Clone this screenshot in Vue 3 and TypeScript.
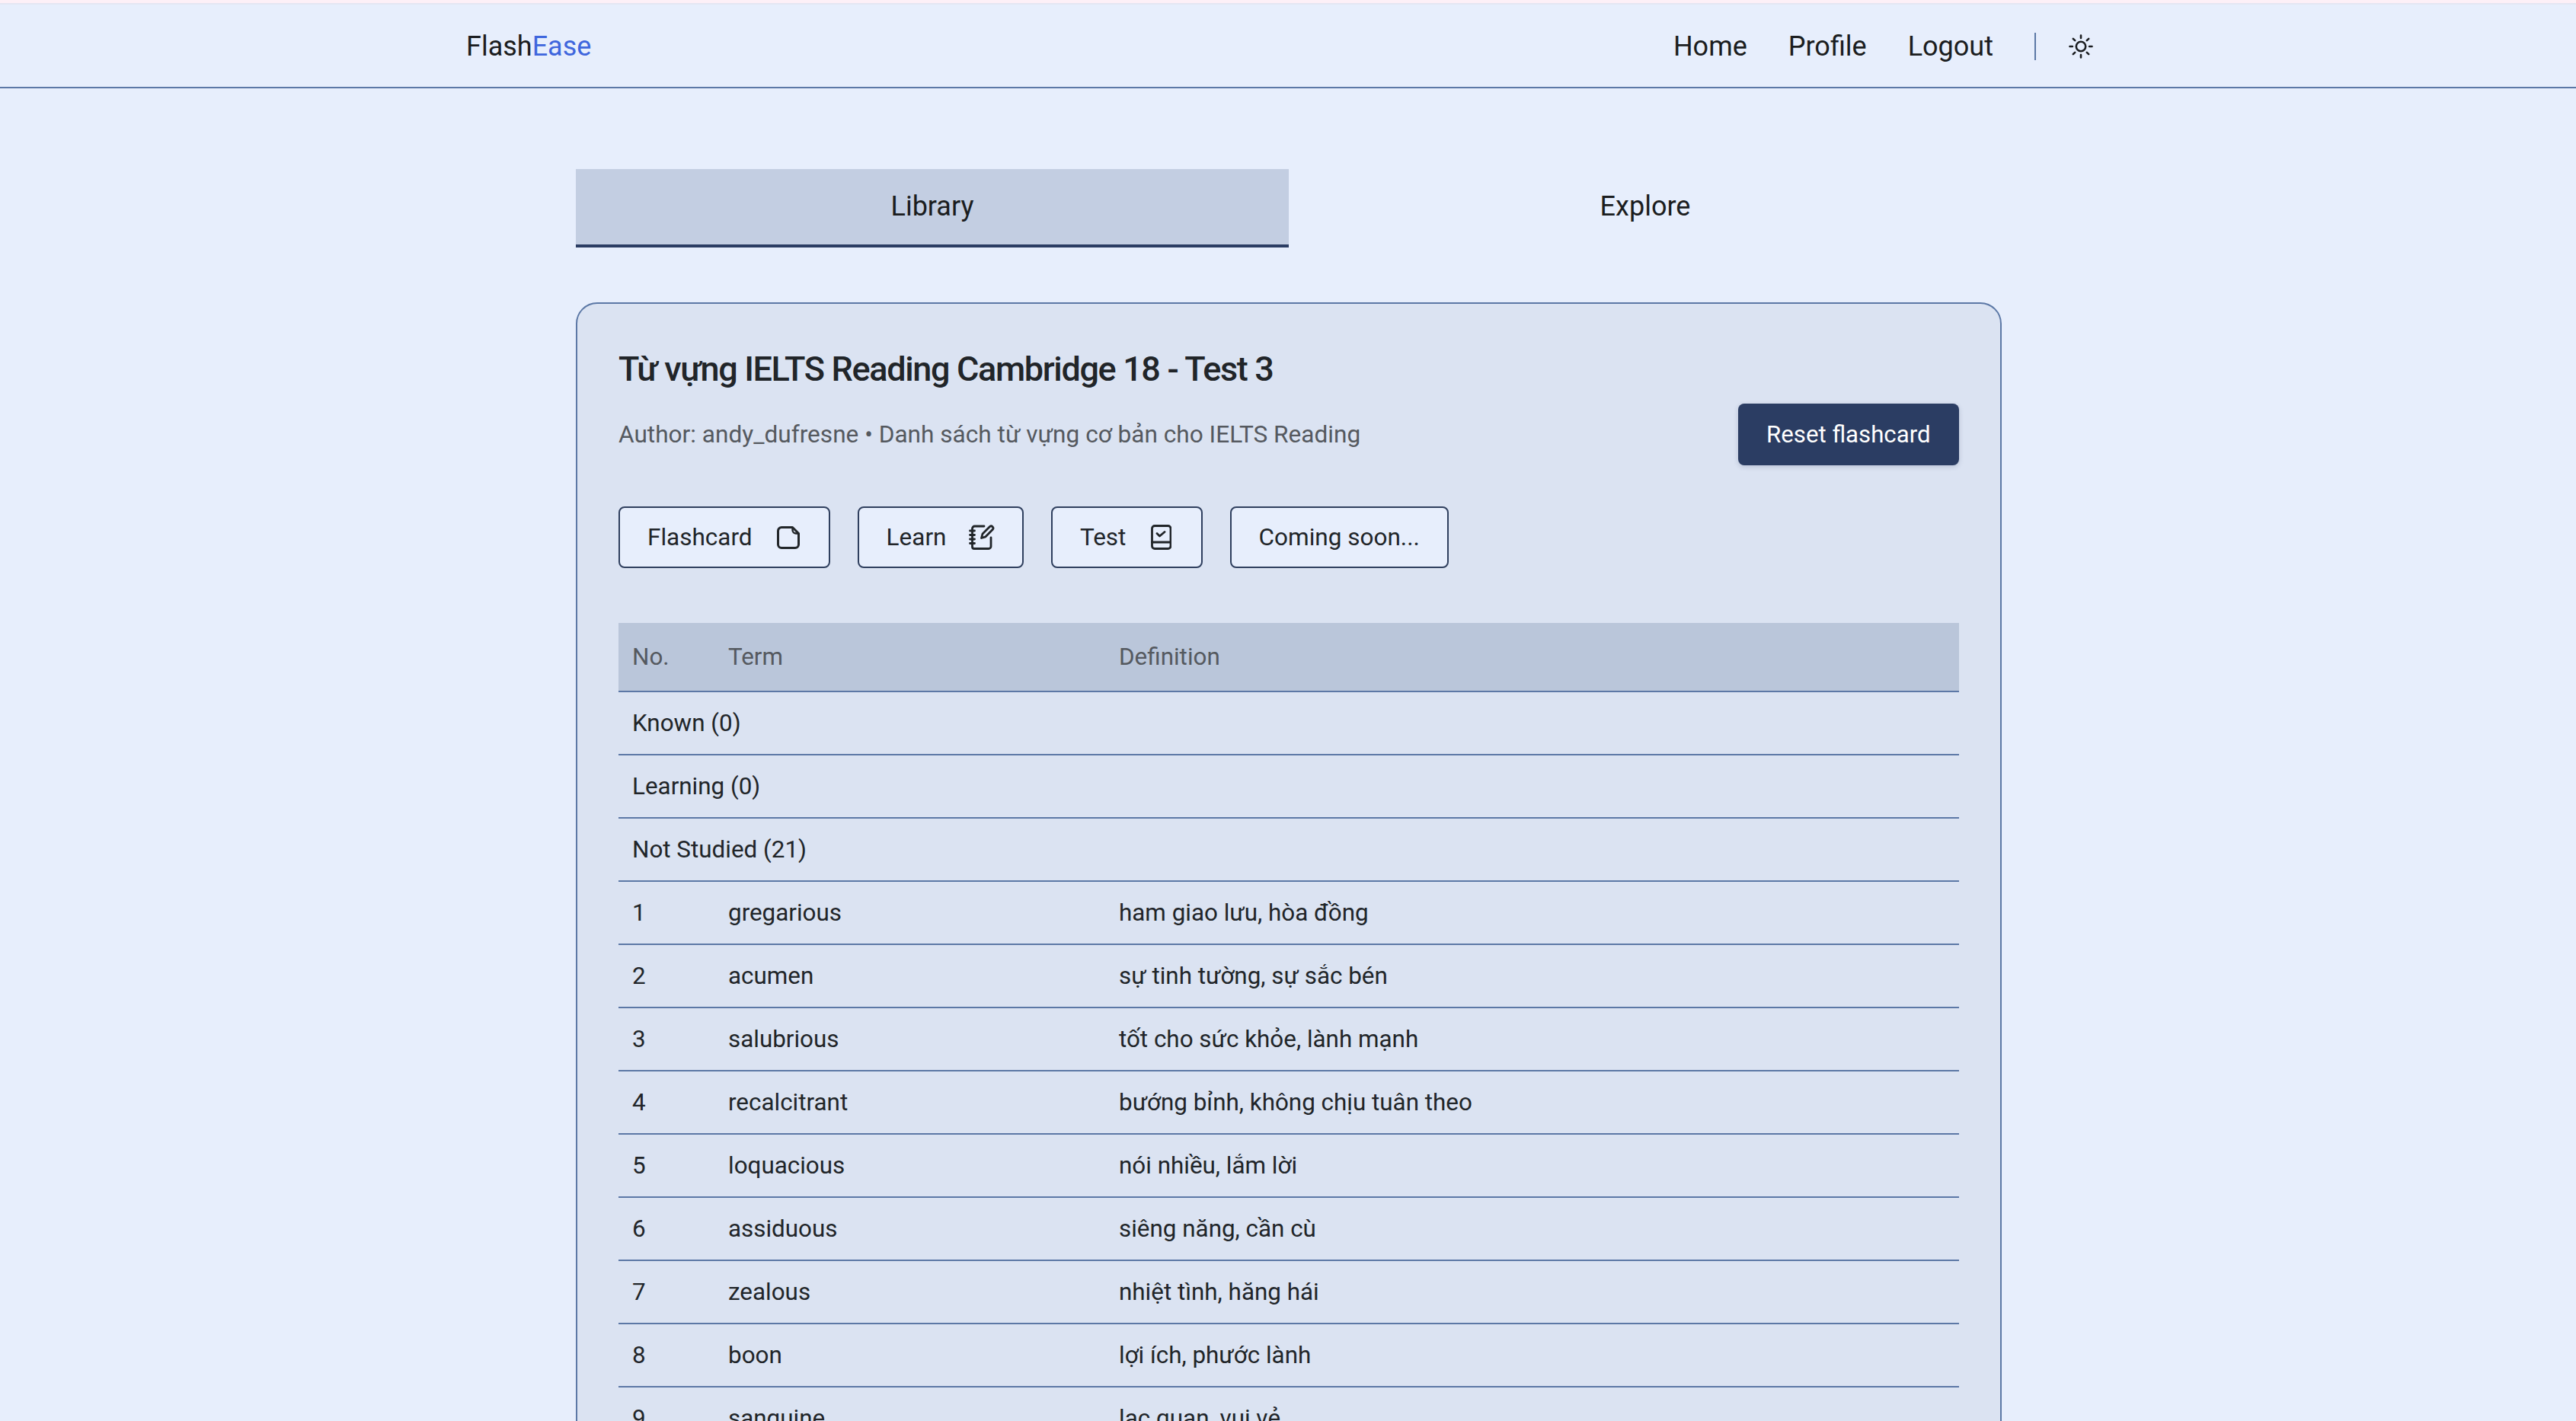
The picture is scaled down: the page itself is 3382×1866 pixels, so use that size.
<script setup lang="ts">
interface Row { no: number; term: string; def: string }
const rows: Row[] = [
  { no: 1, term: 'gregarious', def: 'ham giao lưu, hòa đồng' },
  { no: 2, term: 'acumen', def: 'sự tinh tường, sự sắc bén' },
  { no: 3, term: 'salubrious', def: 'tốt cho sức khỏe, lành mạnh' },
  { no: 4, term: 'recalcitrant', def: 'bướng bỉnh, không chịu tuân theo' },
  { no: 5, term: 'loquacious', def: 'nói nhiều, lắm lời' },
  { no: 6, term: 'assiduous', def: 'siêng năng, cần cù' },
  { no: 7, term: 'zealous', def: 'nhiệt tình, hăng hái' },
  { no: 8, term: 'boon', def: 'lợi ích, phước lành' },
  { no: 9, term: 'sanguine', def: 'lạc quan, vui vẻ' },
]
const groups = ['Known (0)', 'Learning (0)', 'Not Studied (21)']
</script>

<template>
  <div class="page">
    <header class="topbar">
      <div class="brand">Flash<span class="brand-accent">Ease</span></div>
      <nav class="nav">
        <a class="nav-link">Home</a>
        <a class="nav-link">Profile</a>
        <a class="nav-link">Logout</a>
        <span class="nav-divider"></span>
        <svg class="sun" viewBox="0 0 34 34" fill="none" stroke="currentColor" stroke-width="2.6" stroke-linecap="round">
          <circle cx="17" cy="17" r="6.2" />
          <path d="M17 2.5v3.4M17 28.1v3.4M2.5 17h3.4M28.1 17h3.4M6.8 6.8l2.4 2.4M24.8 24.8l2.4 2.4M6.8 27.2l2.4-2.4M24.8 9.2l2.4-2.4" />
        </svg>
      </nav>
    </header>

    <main class="main">
      <div class="tabs">
        <div class="tab tab-active">Library</div>
        <div class="tab">Explore</div>
      </div>

      <section class="card">
        <h1 class="title">Từ vựng IELTS Reading Cambridge 18 - Test 3</h1>
        <div class="meta-row">
          <p class="meta">Author: andy_dufresne • Danh sách từ vựng cơ bản cho IELTS Reading</p>
          <button class="reset">Reset flashcard</button>
        </div>

        <div class="modes">
          <button class="mode">
            Flashcard
            <svg class="ico ico-card" viewBox="0 0 30 30" fill="none" stroke="currentColor" stroke-width="3" stroke-linejoin="round">
              <path d="M6 1.5h14.5l8 8V24a4.5 4.5 0 0 1-4.5 4.5H6A4.5 4.5 0 0 1 1.500 24V6A4.500 4.500 0 0 1 6 1.500z" />
              <path d="M20.500 1.500v3.500a4.500 4.500 0 0 0 4.500 4.500h3.500" stroke-width="2.400" />
            </svg>
          </button>
          <button class="mode">
            Learn
            <svg class="ico ico-learn" viewBox="0 0 34 33" fill="none" stroke="currentColor" stroke-width="2.800" stroke-linecap="round" stroke-linejoin="round">
              <path d="M20 2H7.500A3 3 0 0 0 4.500 5v24a2.500 2.500 0 0 0 2.500 2.500h19a3 3 0 0 0 3-3V17" />
              <path d="M1.500 8h6M1.500 13.500h6M1.500 19h6M1.500 24.500h6" />
              <path d="M16.500 17.500l1.500-5.500L27.500 2.500a2.700 2.700 0 0 1 3.800 3.800L22 15.800z" />
            </svg>
          </button>
          <button class="mode">
            Test
            <svg class="ico ico-test" viewBox="0 0 27 33" fill="none" stroke="currentColor" stroke-width="2.800" stroke-linecap="round" stroke-linejoin="round">
              <rect x="1.500" y="1.500" width="24.500" height="30" rx="3.500" />
              <path d="M1.500 23h24.500" />
              <path d="M8 11.500l3.500 3.500 6.500-5.500" />
            </svg>
          </button>
          <button class="mode">Coming soon...</button>
        </div>

        <table class="vocab">
          <colgroup>
            <col class="col-no" />
            <col class="col-term" />
            <col />
          </colgroup>
          <thead>
            <tr>
              <th>No.</th>
              <th>Term</th>
              <th>Definition</th>
            </tr>
          </thead>
          <tbody>
            <tr v-for="g in groups" :key="g">
              <td colspan="3">{{ g }}</td>
            </tr>
            <tr v-for="r in rows" :key="r.no">
              <td>{{ r.no }}</td>
              <td>{{ r.term }}</td>
              <td>{{ r.def }}</td>
            </tr>
          </tbody>
        </table>
      </section>
    </main>
  </div>
</template>

<style>
html, body { margin: 0; overflow: hidden; background: #e7eefc; }
</style>

<style scoped>
.page {
  min-height: 1866px;
  background: #e7eefc;
  font-family: Roboto, "Noto Sans", sans-serif;
  color: #1b1d20;
}
.topbar {
  box-sizing: border-box;
  height: 116px;
  border-top: 4px solid #fdf0f7;
  border-bottom: 2px solid #5c78a6;
  box-shadow: inset 0 2px 0 #e4e6f3;
  padding: 3px 633px 0 612px;
  display: flex;
  align-items: center;
  justify-content: space-between;
  font-size: 36px;
}
.brand-accent { color: #3f66dd; }
.nav { display: flex; align-items: center; }
.nav-link { margin-right: 54px; }
.nav-divider { width: 2px; height: 36px; background: #5c78a6; margin-right: 42px; }
.sun { width: 34px; height: 34px; display: block; }

.main {
  width: 1872px;
  margin: 0 auto;
  padding-top: 106px;
  position: relative;
  left: 1px;
}
.tabs { display: flex; }
.tab {
  flex: 1;
  box-sizing: border-box;
  height: 103px;
  padding-bottom: 2px;
  display: flex;
  align-items: center;
  justify-content: center;
  font-size: 36px;
  border-bottom: 4px solid transparent;
}
.tab-active { background: #c3cee2; border-bottom-color: #2b3d63; }

.card {
  box-sizing: border-box;
  margin-top: 72px;
  border: 2px solid #5c78a6;
  border-radius: 28px;
  background: #dbe3f2;
  padding: 57px 54px 60px;
}
.title {
  margin: 0;
  font-size: 45px;
  line-height: 58px;
  font-weight: 500;
  letter-spacing: -1.35px;
  color: #212529;
}
.meta-row {
  margin-top: 16px;
  display: flex;
  align-items: center;
  justify-content: space-between;
}
.meta { margin: 0; font-size: 31.6px; color: #55595f; }
.reset {
  height: 81px;
  padding: 0 37.5px;
  border: 0;
  border-radius: 8px;
  background: #2b3d63;
  color: #fff;
  font: inherit;
  font-size: 31.200px;
  box-shadow: 0 2px 6px rgba(43, 61, 99, 0.2);
}
.modes { margin-top: 54px; display: flex; gap: 36px; }
.mode {
  height: 81px;
  box-sizing: border-box;
  padding: 0 36px;
  display: inline-flex;
  align-items: center;
  gap: 32px;
  border: 2px solid #2f3f5e;
  border-radius: 8px;
  background: #e7eefc;
  color: #212529;
  font: inherit;
  font-size: 31.500px;
}
.ico { display: block; flex: none; }
.ico-card { width: 30px; height: 30px; margin-right: 2px; }
.ico-learn { width: 34px; height: 33px; margin: 0 0 0 -2.6px; }
.ico-test { width: 27px; height: 33px; margin: 0 2.2px 0 1px; }

.vocab {
  margin-top: 72px;
  width: 100%;
  table-layout: fixed;
  border-collapse: separate;
  border-spacing: 0;
  font-size: 31.400px;
}
.col-no { width: 126px; }
.col-term { width: 513px; }
.vocab th, .vocab td {
  box-sizing: border-box;
  padding: 0 18px;
  text-align: left;
  border-bottom: 2px solid #5c78a6;
  font-weight: 400;
}
.vocab th { height: 91px; background: #bac6da; color: #55595f; }
.vocab td { height: 83px; color: #212529; }
</style>
